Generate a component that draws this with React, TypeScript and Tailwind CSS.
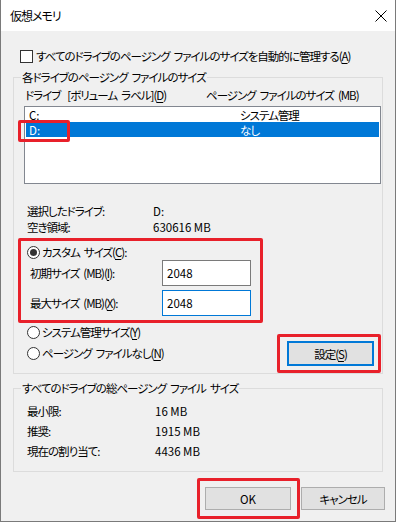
import type { ReactNode } from 'react';

const RED = 'border-[3px] border-[#e8202a] rounded-[2px]';

function Key({ children }: { children: ReactNode }) {
  return <span className="underline underline-offset-2">{children}</span>;
}

function Num({ children }: { children: ReactNode }) {
  return <span className="tracking-[0px]">{children}</span>;
}

// real space, but wide enough to read like the Yu Gothic UI gap
function Sp({ wide }: { wide?: boolean }) {
  return <span className={`inline-block ${wide ? 'w-[7px]' : 'w-[4px]'}`}> </span>;
}

function Radio({ checked }: { checked?: boolean }) {
  return (
    <span className="w-[13px] h-[13px] rounded-full border border-[#333333] bg-white flex items-center justify-center shrink-0">
      {checked && <span className="w-[7px] h-[7px] rounded-full bg-[#333333]" />}
    </span>
  );
}

function Button({ children, focused, className = '' }: { children: ReactNode; focused?: boolean; className?: string }) {
  return (
    <div
      className={`bg-[#e1e1e1] flex items-center justify-center ${
        focused ? 'border-2 border-[#0078d7]' : 'border border-[#adadad]'
      } ${className}`}
    >
      {children}
    </div>
  );
}

export default function App() {
  return (
    <div className="w-[396px] h-[523px] bg-white font-['Noto_Sans_CJK_JP',sans-serif] [font-feature-settings:'palt'] text-[11.5px] tracking-[-1px] leading-[16px] text-black">
      <div className="w-[396px] h-[522px] border-x border-b border-[#7a7a7a] bg-[#f0f0f0] flex flex-col">
        {/* title bar */}
        <div className="h-[31px] bg-white flex items-center justify-between pl-[9px] pr-[8px] shrink-0">
          <span className="text-[12px]">仮想メモリ</span>
          <svg width="12" height="12" viewBox="0 0 12 12" className="text-black">
            <path d="M0.5 0.5 L11.5 11.5 M11.5 0.5 L0.5 11.5" stroke="currentColor" strokeWidth="1" />
          </svg>
        </div>

        <div className="flex flex-col px-[12px]">
          <div className="mt-[17px] h-[16px] flex items-center pl-[7px] gap-[3px] whitespace-nowrap">
            <span className="w-[13px] h-[13px] border border-[#333333] bg-white shrink-0" />
            <span>
              すべてのドライブのページング<Sp />ファイルのサイズを自動的に管理する(<Key>A</Key>)
            </span>
          </div>

          <fieldset className="mt-[5px] border border-[#dcdcdc] min-w-0">
            <legend className="ml-[7px] px-[1px] leading-[16px] whitespace-nowrap">
              各ドライブのページング<Sp />ファイルのサイズ
            </legend>
            <div className="mt-[2px] h-[16px] flex pl-[11px] whitespace-nowrap">
              <span className="w-[181px]">
                ドライブ<Sp wide />[ボリューム<Sp />ラベル](<Key>D</Key>)
              </span>
              <span>
                ページング<Sp />ファイルのサイズ<Sp />(MB)
              </span>
            </div>

            <div className="relative mt-[3px] ml-[10px] mr-[1px] h-[78px] border border-[#828790] bg-white">
              <div className="h-[15px] flex items-center pl-[4px]">
                <span className="w-[211px]">
                  <Num>C:</Num>
                </span>
                <span>システム管理</span>
              </div>
              <div className="h-[15px] flex items-center pl-[4px] mr-[1px] bg-[#0078d7] text-white border-l border-white">
                <span className="w-[211px] -ml-[1px]">
                  <Num>D:</Num>
                </span>
                <span>なし</span>
              </div>
              <div className={`absolute left-[-7px] top-[13px] w-[52px] h-[22px] ${RED}`} />
            </div>

            <div className="mt-[19px] pl-[13px] flex flex-col">
              <div className="h-[16px] flex">
                <span className="w-[126px]">選択したドライブ:</span>
                <Num>D:</Num>
              </div>
              <div className="h-[16px] flex">
                <span className="w-[126px]">空き領域:</span>
                <Num>630616 MB</Num>
              </div>
            </div>

            <div className={`mt-[3px] ml-[4px] w-[245px] h-[85px] ${RED} flex flex-col`}>
              <div className="mt-[3px] h-[16px] flex items-center pl-[6px] gap-[2px]">
                <Radio checked />
                <span className="whitespace-nowrap">
                  カスタム<Sp />サイズ(<Key>C</Key>):
                </span>
              </div>
              <div className="h-[26px] flex items-center pl-[9px]">
                <span className="w-[132px] whitespace-nowrap">
                  初期サイズ<Sp />(MB)(<Key>I</Key>):
                </span>
                <div className="w-[89px] h-[26px] border border-[#7a7a7a] bg-white flex items-center pl-[4px]">
                  <Num>2048</Num>
                </div>
              </div>
              <div className="mt-[4px] h-[26px] flex items-center pl-[9px]">
                <span className="w-[132px] whitespace-nowrap">
                  最大サイズ<Sp />(MB)(<Key>X</Key>):
                </span>
                <div className="w-[89px] h-[26px] border border-[#0078d7] bg-white flex items-center pl-[4px]">
                  <Num>2048</Num>
                </div>
              </div>
            </div>

            <div className="flex justify-between">
              <div className="pl-[13px] flex flex-col">
                <div className="mt-[1px] h-[16px] flex items-center gap-[2px]">
                  <Radio />
                  <span>
                    システム管理サイズ(<Key>Y</Key>)
                  </span>
                </div>
                <div className="mt-[5px] h-[16px] flex items-center gap-[2px]">
                  <Radio />
                  <span className="whitespace-nowrap">
                    ページング<Sp />ファイルなし(<Key>N</Key>)
                  </span>
                </div>
              </div>
              <div className={`mt-[11px] mr-[1px] w-[104px] h-[39px] ${RED}`}>
                <Button focused className="ml-[7px] mt-[4px] w-[87px] h-[25px]">
                  <span>
                    設定(<Key>S</Key>)
                  </span>
                </Button>
              </div>
            </div>
          </fieldset>

          <fieldset className="mt-[6px] border border-[#dcdcdc] min-w-0 pb-[12px]">
            <legend className="ml-[7px] px-[1px] leading-[16px] whitespace-nowrap">
              すべてのドライブの総ページング<Sp />ファイル<Sp />サイズ
            </legend>
            <div className="mt-[7px] pl-[13px] flex flex-col gap-[4px]">
              <div className="h-[16px] flex">
                <span className="w-[128px]">最小限:</span>
                <Num>16 MB</Num>
              </div>
              <div className="h-[16px] flex">
                <span className="w-[128px]">推奨:</span>
                <Num>1915 MB</Num>
              </div>
              <div className="h-[16px] flex">
                <span className="w-[128px]">現在の割り当て:</span>
                <Num>4436 MB</Num>
              </div>
            </div>
          </fieldset>

          <div className="mt-[6px] mr-[-2px] flex justify-end items-start">
            <div className={`w-[103px] h-[41px] ${RED}`}>
              <Button className="ml-[5px] mt-[6px] w-[86px] h-[23px]">
                <Num>OK</Num>
              </Button>
            </div>
            <Button className="ml-[1px] mt-[9px] w-[84px] h-[23px]">キャンセル</Button>
          </div>
        </div>
      </div>
    </div>
  );
}
